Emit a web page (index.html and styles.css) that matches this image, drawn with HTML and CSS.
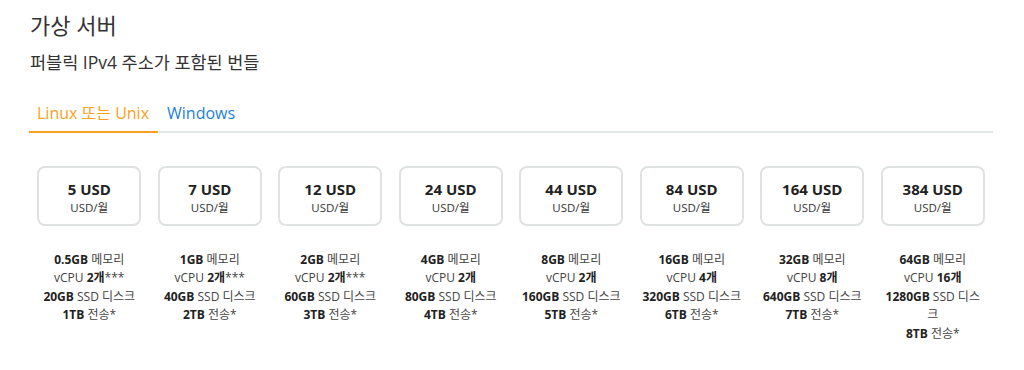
FILE: index.html
```html
<!DOCTYPE html>
<html lang="ko">
<head>
<meta charset="utf-8">
<link rel="stylesheet" href="styles.css">
</head>
<body>
<div class="page">
  <h1 class="title">가상 서버</h1>
  <h2 class="subtitle">퍼블릭 IPv4 주소가 포함된 번들</h2>
  <div class="tabs">
    <div class="tab active">Linux 또는 Unix</div>
    <div class="tab">Windows</div>
  </div>
  <div class="plans">
    <div class="plan">
      <div class="card"><div class="price">5 USD</div><div class="per">USD/월</div></div>
      <div class="specs"><b>0.5GB</b> 메모리<br>vCPU <b>2개</b>***<br><b>20GB</b> SSD 디스크<br><b>1TB</b> 전송*</div>
    </div>
    <div class="plan">
      <div class="card"><div class="price">7 USD</div><div class="per">USD/월</div></div>
      <div class="specs"><b>1GB</b> 메모리<br>vCPU <b>2개</b>***<br><b>40GB</b> SSD 디스크<br><b>2TB</b> 전송*</div>
    </div>
    <div class="plan">
      <div class="card"><div class="price">12 USD</div><div class="per">USD/월</div></div>
      <div class="specs"><b>2GB</b> 메모리<br>vCPU <b>2개</b>***<br><b>60GB</b> SSD 디스크<br><b>3TB</b> 전송*</div>
    </div>
    <div class="plan">
      <div class="card"><div class="price">24 USD</div><div class="per">USD/월</div></div>
      <div class="specs"><b>4GB</b> 메모리<br>vCPU <b>2개</b><br><b>80GB</b> SSD 디스크<br><b>4TB</b> 전송*</div>
    </div>
    <div class="plan">
      <div class="card"><div class="price">44 USD</div><div class="per">USD/월</div></div>
      <div class="specs"><b>8GB</b> 메모리<br>vCPU <b>2개</b><br><b>160GB</b> SSD 디스크<br><b>5TB</b> 전송*</div>
    </div>
    <div class="plan">
      <div class="card"><div class="price">84 USD</div><div class="per">USD/월</div></div>
      <div class="specs"><b>16GB</b> 메모리<br>vCPU <b>4개</b><br><b>320GB</b> SSD 디스크<br><b>6TB</b> 전송*</div>
    </div>
    <div class="plan">
      <div class="card"><div class="price">164 USD</div><div class="per">USD/월</div></div>
      <div class="specs"><b>32GB</b> 메모리<br>vCPU <b>8개</b><br><b>640GB</b> SSD 디스크<br><b>7TB</b> 전송*</div>
    </div>
    <div class="plan">
      <div class="card"><div class="price">384 USD</div><div class="per">USD/월</div></div>
      <div class="specs"><b>64GB</b> 메모리<br>vCPU <b>16개</b><br><b>1280GB</b> SSD 디스크<br><b>8TB</b> 전송*</div>
    </div>
  </div>
</div>
</body>
</html>
```
FILE: styles.css
```css
html, body {
  margin: 0;
  padding: 0;
  background: #ffffff;
}
body {
  font-family: "Open Sans", "Noto Sans CJK KR", sans-serif;
  color: #333333;
}
.page {
  padding: 10px 31px 0 29px;
}
.title {
  margin: 0 0 0 1px;
  font-size: 22px;
  font-weight: 400;
  line-height: 30px;
  color: #333;
}
.subtitle {
  margin: 10px 0 0 1px;
  font-size: 17.5px;
  font-weight: 400;
  line-height: 24px;
  color: #333;
}
.tabs {
  display: flex;
  margin-top: 22px;
  border-bottom: 2px solid #e5e8e8;
}
.tab {
  padding: 6px 8px 7px 9px;
  font-size: 16px;
  line-height: 22px;
  color: #1b7fdf;
  margin-bottom: -2px;
  border-bottom: 2px solid transparent;
}
.tab.active {
  padding: 6px 9px 7px 8px;
  color: #fb9f1e;
  border-bottom-color: #fb9f1e;
}
.plans {
  display: grid;
  grid-template-columns: repeat(8, 1fr);
  margin-top: 33px;
}
.plan {
  display: flex;
  flex-direction: column;
  align-items: center;
}
.card {
  box-sizing: border-box;
  width: 104px;
  height: 60px;
  border: 2px solid #dfe2e2;
  border-radius: 8px;
  text-align: center;
  padding-top: 11px;
}
.price {
  font-size: 15px;
  font-weight: 700;
  line-height: 20px;
  color: #222;
}
.per {
  font-size: 11.5px;
  line-height: 18px;
  margin-top: 0;
  color: #333;
}
.specs {
  width: 104px;
  margin-top: 25px;
  text-align: center;
  font-size: 12px;
  line-height: 18.4px;
  color: #444;
}
.specs b {
  color: #222;
}
```
